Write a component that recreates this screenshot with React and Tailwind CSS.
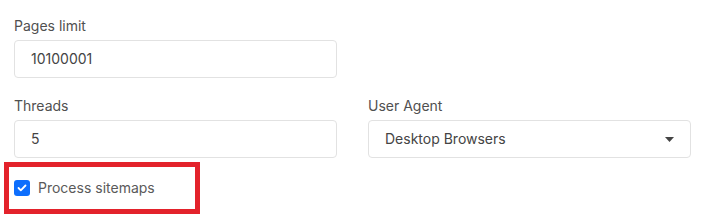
export default function App() {
  return (
    <div className="w-[702px] h-[220px] bg-white pl-[14px] pt-[16px] text-[14px] leading-[20px]" style={{ fontFamily: "Inter, 'Noto Sans', sans-serif" }}>
      <div className="w-[323px]">
        <div className="text-[#505050]">Pages limit</div>
        <div className="mt-[4px] h-[38px] w-[323px] rounded-[4px] border border-[#e2e2e2] flex items-center pl-[16px] text-[#444]">10100001</div>
      </div>
      <div className="flex gap-[31px] mt-[18px]">
        <div className="w-[323px]">
          <div className="text-[#505050]">Threads</div>
          <div className="mt-[4px] h-[38px] rounded-[4px] border border-[#e2e2e2] flex items-center pl-[16px] text-[#444]">5</div>
        </div>
        <div className="w-[323px]">
          <div className="text-[#505050]">User Agent</div>
          <div className="mt-[4px] h-[38px] rounded-[4px] border border-[#e2e2e2] flex items-center justify-between pl-[16px] pr-[16px] text-[#444]">
            <span>Desktop Browsers</span>
            <svg width="9" height="5" viewBox="0 0 9 5"><path d="M0 0h9L4.5 5z" fill="#444" /></svg>
          </div>
        </div>
      </div>
      <div className="mt-[4px] -ml-[10px] w-[196px] h-[52px] border-[5px] border-[#e3222b] flex items-center pl-[5px]">
        <div className="w-[16px] h-[16px] rounded-[3px] bg-[#0d6efd] flex items-center justify-center">
          <svg width="10" height="8" viewBox="0 0 10 8"><path d="M1.5 4l2.3 2.3L8.5 1.5" stroke="#fff" strokeWidth="1.8" fill="none" strokeLinecap="round" strokeLinejoin="round" /></svg>
        </div>
        <span className="ml-[8px] text-[#5a5a5a]">Process sitemaps</span>
      </div>
    </div>
  );
}
